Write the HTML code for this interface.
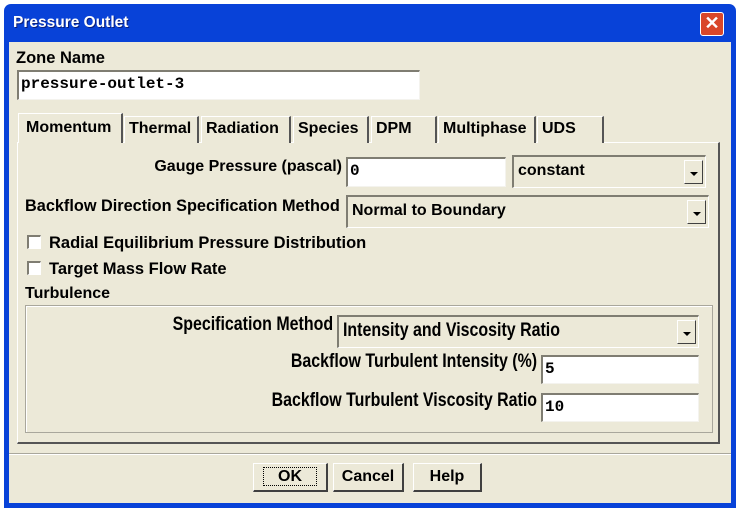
<!DOCTYPE html>
<html><head><style>
*{margin:0;padding:0;box-sizing:border-box}
body{width:740px;height:510px;background:#fff;position:relative;overflow:hidden;font-family:"Liberation Sans",sans-serif;font-weight:bold;font-size:16px;color:#000}
.a{position:absolute;white-space:nowrap}
.win{left:4px;top:4px;width:732px;height:504px;background:#0842d8;border-radius:7px 7px 0 0}
.body{left:9px;top:42px;width:722px;height:461px;background:#ece9d8}
.title{left:13px;top:14px;color:#fff;font-size:15.5px;text-shadow:1px 1px #0a1e7a}
.close{left:700px;top:12px;width:24px;height:24px;background:#d9462a;border:1px solid #fff;border-radius:3px;color:#fff;text-align:center;line-height:21px;font-size:18px}
.in{background:#fff;border-top:2px solid #7f7d72;border-left:2px solid #7f7d72;border-bottom:1px solid #f4f3ee;border-right:1px solid #f4f3ee;font-family:"Liberation Mono",monospace;font-size:16px;padding:3px 2px}
.dd{background:#ece9d8;border-top:2px solid #7f7d72;border-left:2px solid #7f7d72;border-bottom:1px solid #fff;border-right:1px solid #fff;padding:5px 4px;font-size:16px}
.arr{position:absolute;right:2px;top:3px;width:19px;bottom:3px;background:#ece9d8;border-top:1px solid #fff;border-left:1px solid #fff;border-right:1px solid #404040;border-bottom:1px solid #404040}
.arr:after{content:"";position:absolute;left:5px;top:11px;border-left:4px solid transparent;border-right:4px solid transparent;border-top:4px solid #000}
.tab{top:116px;height:27px;border-top:1px solid #fff;border-left:1px solid #fff;border-right:2px solid #555;padding:3px 4px;font-size:16px;background:#ece9d8}
.panel{left:17px;top:142px;width:703px;height:302px;border-top:1px solid #fff;border-left:1px solid #fff;border-right:2px solid #555;border-bottom:2px solid #555}
.cb{width:14px;height:14px;background:#fff;border-top:2px solid #7f7d72;border-left:2px solid #7f7d72;border-bottom:1px solid #fff;border-right:1px solid #fff}
.n{transform:scaleX(.84);transform-origin:right center;font-size:19px}
.btn{top:463px;height:29px;border-top:1px solid #fff;border-left:1px solid #fff;border-right:2px solid #404040;border-bottom:2px solid #404040;text-align:center;line-height:26px;font-size:16px}
</style></head><body>
<div class="a win"></div>
<div class="a body"></div>
<div class="a title">Pressure Outlet</div>
<div class="a close">✕</div>
<div class="a" style="left:16px;top:49px;font-size:16.5px">Zone Name</div>
<div class="a in" style="left:17px;top:70px;width:403px;height:30px">pressure-outlet-3</div>

<div class="a panel"></div>
<div class="a tab" style="left:18px;top:113px;height:30px;width:105px;border-bottom:none;padding-top:5px;padding-left:7px">Momentum</div>
<div class="a tab" style="left:124px;width:75px">Thermal</div>
<div class="a tab" style="left:201px;width:90px">Radiation</div>
<div class="a tab" style="left:293px;width:76px">Species</div>
<div class="a tab" style="left:371px;width:66px">DPM</div>
<div class="a tab" style="left:438px;width:98px">Multiphase</div>
<div class="a tab" style="left:537px;width:67px">UDS</div>

<div class="a" style="right:398px;top:158px">Gauge Pressure (pascal)</div>
<div class="a in" style="left:346px;top:157px;width:160px;height:30px">0</div>
<div class="a dd" style="left:512px;top:155px;width:194px;height:33px">constant<div class="arr"></div></div>
<div class="a" style="left:25px;top:197px;font-size:16.3px">Backflow Direction Specification Method</div>
<div class="a dd" style="left:346px;top:195px;width:363px;height:33px">Normal to Boundary<div class="arr"></div></div>
<div class="a cb" style="left:27px;top:235px"></div>
<div class="a" style="left:49px;top:234px;font-size:16.5px">Radial Equilibrium Pressure Distribution</div>
<div class="a cb" style="left:27px;top:261px"></div>
<div class="a" style="left:49px;top:260px;font-size:16.5px">Target Mass Flow Rate</div>
<div class="a" style="left:25px;top:285px">Turbulence</div>
<div class="a" style="left:25px;top:305px;width:688px;height:128px;border:1px solid #a9a79c;box-shadow:1px 1px 0 #fff inset"></div>

<div class="a n" style="right:407px;top:314px">Specification Method</div>
<div class="a dd" style="left:337px;top:315px;width:362px;height:33px;padding-top:3px"><span style="display:inline-block;transform:scaleX(.84);transform-origin:left center;font-size:19px">Intensity and Viscosity Ratio</span><div class="arr"></div></div>
<div class="a n" style="right:203px;top:351px">Backflow Turbulent Intensity (%)</div>
<div class="a in" style="left:541px;top:355px;width:158px;height:29px">5</div>
<div class="a n" style="right:203px;top:390px">Backflow Turbulent Viscosity Ratio</div>
<div class="a in" style="left:541px;top:393px;width:158px;height:29px">10</div>

<div class="a" style="left:9px;top:453px;width:722px;height:2px;border-top:1px solid #a9a79c;border-bottom:1px solid #fff"></div>
<div class="a btn" style="left:253px;width:75px"><span style="outline:1px dotted #000;padding:0 14px">OK</span></div>
<div class="a btn" style="left:333px;width:71px">Cancel</div>
<div class="a btn" style="left:413px;width:69px">Help</div>
</body></html>
